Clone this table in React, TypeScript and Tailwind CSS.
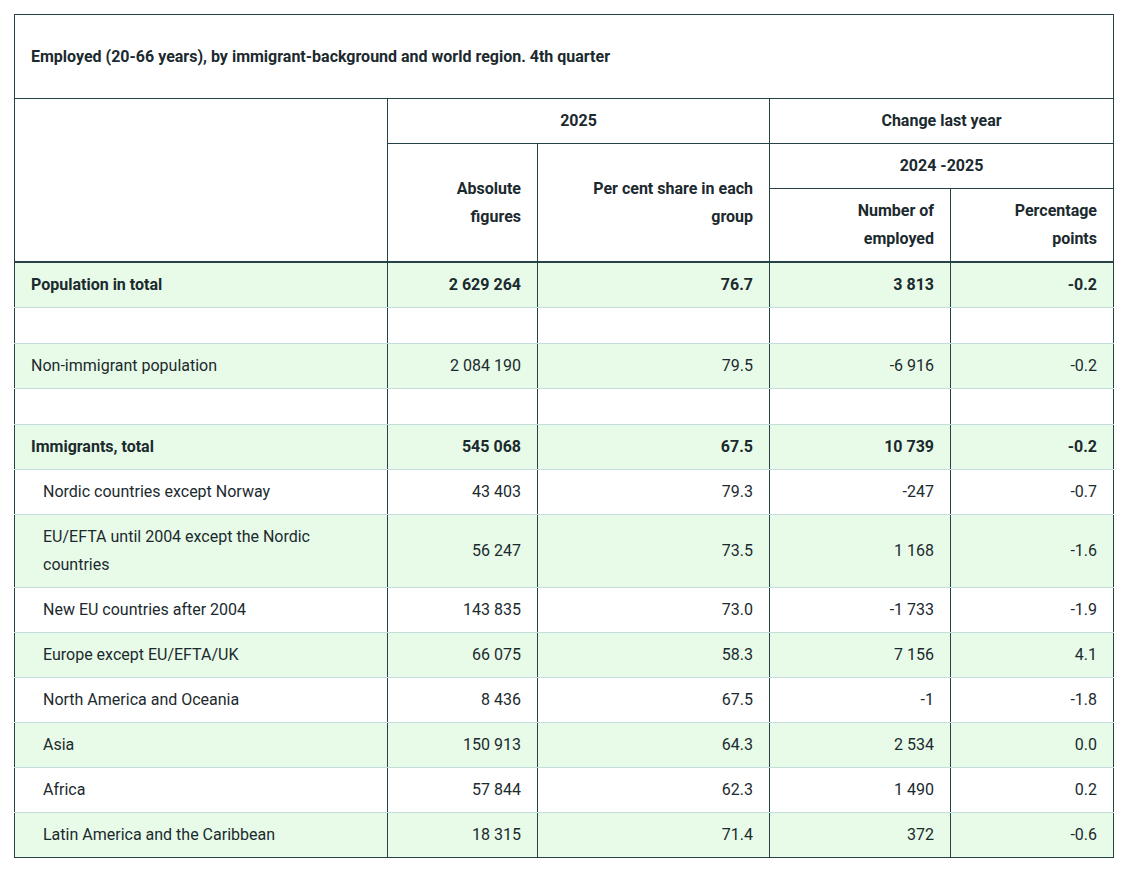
import React from "react";

type Row = {
  label: string;
  values?: string[];
  bold?: boolean;
  indent?: boolean;
  green?: boolean;
  empty?: boolean;
};

const rows: Row[] = [
  { label: "Population in total", values: ["2 629 264", "76.7", "3 813", "-0.2"], bold: true, green: true },
  { label: "", empty: true },
  { label: "Non-immigrant population", values: ["2 084 190", "79.5", "-6 916", "-0.2"], green: true },
  { label: "", empty: true },
  { label: "Immigrants, total", values: ["545 068", "67.5", "10 739", "-0.2"], bold: true, green: true },
  { label: "Nordic countries except Norway", values: ["43 403", "79.3", "-247", "-0.7"], indent: true },
  { label: "EU/EFTA until 2004 except the Nordic countries", values: ["56 247", "73.5", "1 168", "-1.6"], indent: true, green: true },
  { label: "New EU countries after 2004", values: ["143 835", "73.0", "-1 733", "-1.9"], indent: true },
  { label: "Europe except EU/EFTA/UK", values: ["66 075", "58.3", "7 156", "4.1"], indent: true, green: true },
  { label: "North America and Oceania", values: ["8 436", "67.5", "-1", "-1.8"], indent: true },
  { label: "Asia", values: ["150 913", "64.3", "2 534", "0.0"], indent: true, green: true },
  { label: "Africa", values: ["57 844", "62.3", "1 490", "0.2"], indent: true },
  { label: "Latin America and the Caribbean", values: ["18 315", "71.4", "372", "-0.6"], indent: true, green: true },
];

export default function App() {
  const th = "border border-[#274247] px-4 py-2 font-bold text-[16px] leading-[28px] align-middle";
  return (
    <div className="min-h-screen bg-white pt-[14px] pl-[14px] text-[#1b2a2e]" style={{ fontFamily: "Roboto, 'Liberation Sans', sans-serif" }}>
      <table className="w-[1099px] table-fixed border-collapse border border-[#274247]">
        <colgroup>
          <col className="w-[373px]" />
          <col className="w-[150px]" />
          <col className="w-[232px]" />
          <col className="w-[181px]" />
          <col className="w-[163px]" />
        </colgroup>
        <thead>
          <tr className="h-[84px]">
            <th colSpan={5} className={`${th} text-left`}>
              Employed (20-66 years), by immigrant-background and world region. 4th quarter
            </th>
          </tr>
          <tr>
            <th rowSpan={3} className={th}></th>
            <th colSpan={2} className={`${th} text-center`}>2025</th>
            <th colSpan={2} className={`${th} text-center`}>Change last year</th>
          </tr>
          <tr>
            <th rowSpan={2} className={`${th} text-right`}>Absolute figures</th>
            <th rowSpan={2} className={`${th} text-right`}>Per cent share in each group</th>
            <th colSpan={2} className={`${th} text-center`}>2024 -2025</th>
          </tr>
          <tr>
            <th className={`${th} text-right`}>Number of employed</th>
            <th className={`${th} text-right`}>Percentage points</th>
          </tr>
        </thead>
        <tbody className="border-t-2 border-[#274247]">
          {rows.map((r, i) => {
            const bg = r.green ? "bg-[#e8fbe8]" : "bg-white";
            const last = i === rows.length - 1;
            const cell = `border-x border-x-[#274247] border-y border-y-[#c4dcdc] px-4 text-[16px] leading-[28px] ${r.bold ? "font-bold" : "font-normal"} ${i === 0 ? "border-t-[#274247]" : ""} ${last ? "border-b-[#274247]" : ""}`;
            if (r.empty) {
              return (
                <tr key={i} className={`${bg} h-[36px]`}>
                  {[0, 1, 2, 3, 4].map((k) => (
                    <td key={k} className={`${cell} py-0`}></td>
                  ))}
                </tr>
              );
            }
            return (
              <tr key={i} className={bg}>
                <td className={`${cell} py-2 text-left ${r.indent ? "pl-7" : ""}`}>{r.label}</td>
                {r.values!.map((v, k) => (
                  <td key={k} className={`${cell} py-2 text-right`}>{v}</td>
                ))}
              </tr>
            );
          })}
        </tbody>
      </table>
    </div>
  );
}
